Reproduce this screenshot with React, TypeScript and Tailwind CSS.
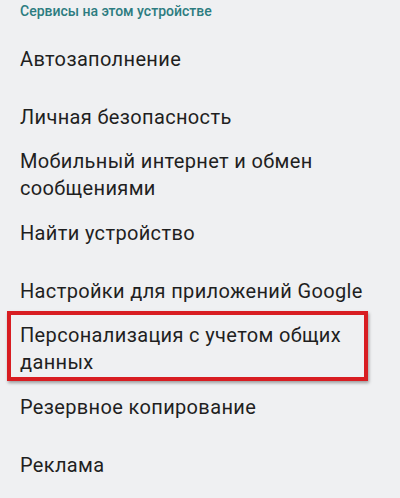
import React from 'react';

type Item = { label: string; highlight?: boolean };

const ITEMS: Item[] = [
  { label: 'Автозаполнение' },
  { label: 'Личная безопасность' },
  { label: 'Мобильный интернет и обмен сообщениями' },
  { label: 'Найти устройство' },
  { label: 'Настройки для приложений Google' },
  { label: 'Персонализация с учетом общих данных', highlight: true },
  { label: 'Резервное копирование' },
  { label: 'Реклама' },
];

export default function App() {
  return (
    <div className="w-[400px] h-[498px] overflow-hidden bg-[#eff0f2] font-['Roboto',sans-serif]">
      <div className="pl-5 pt-[1px] text-[14px] leading-[20px] font-medium text-[#2c7c80]">
        Сервисы на этом устройстве
      </div>
      <div className="mt-[9px] flex flex-col">
        {ITEMS.map((it) => (
          <div key={it.label} className="relative min-h-[58px] flex items-center py-[2px] pl-5 pr-8">
            {it.highlight && (
              <div className="absolute left-[7px] right-[32px] -top-[9px] -bottom-[3px] border-4 border-[#d81d22] shadow-[1px_2px_3px_rgba(0,0,0,0.35)]" />
            )}
            <span className="text-[20px] leading-[27px] tracking-[0.35px] text-[#1f1f1f]">{it.label}</span>
          </div>
        ))}
      </div>
    </div>
  );
}
